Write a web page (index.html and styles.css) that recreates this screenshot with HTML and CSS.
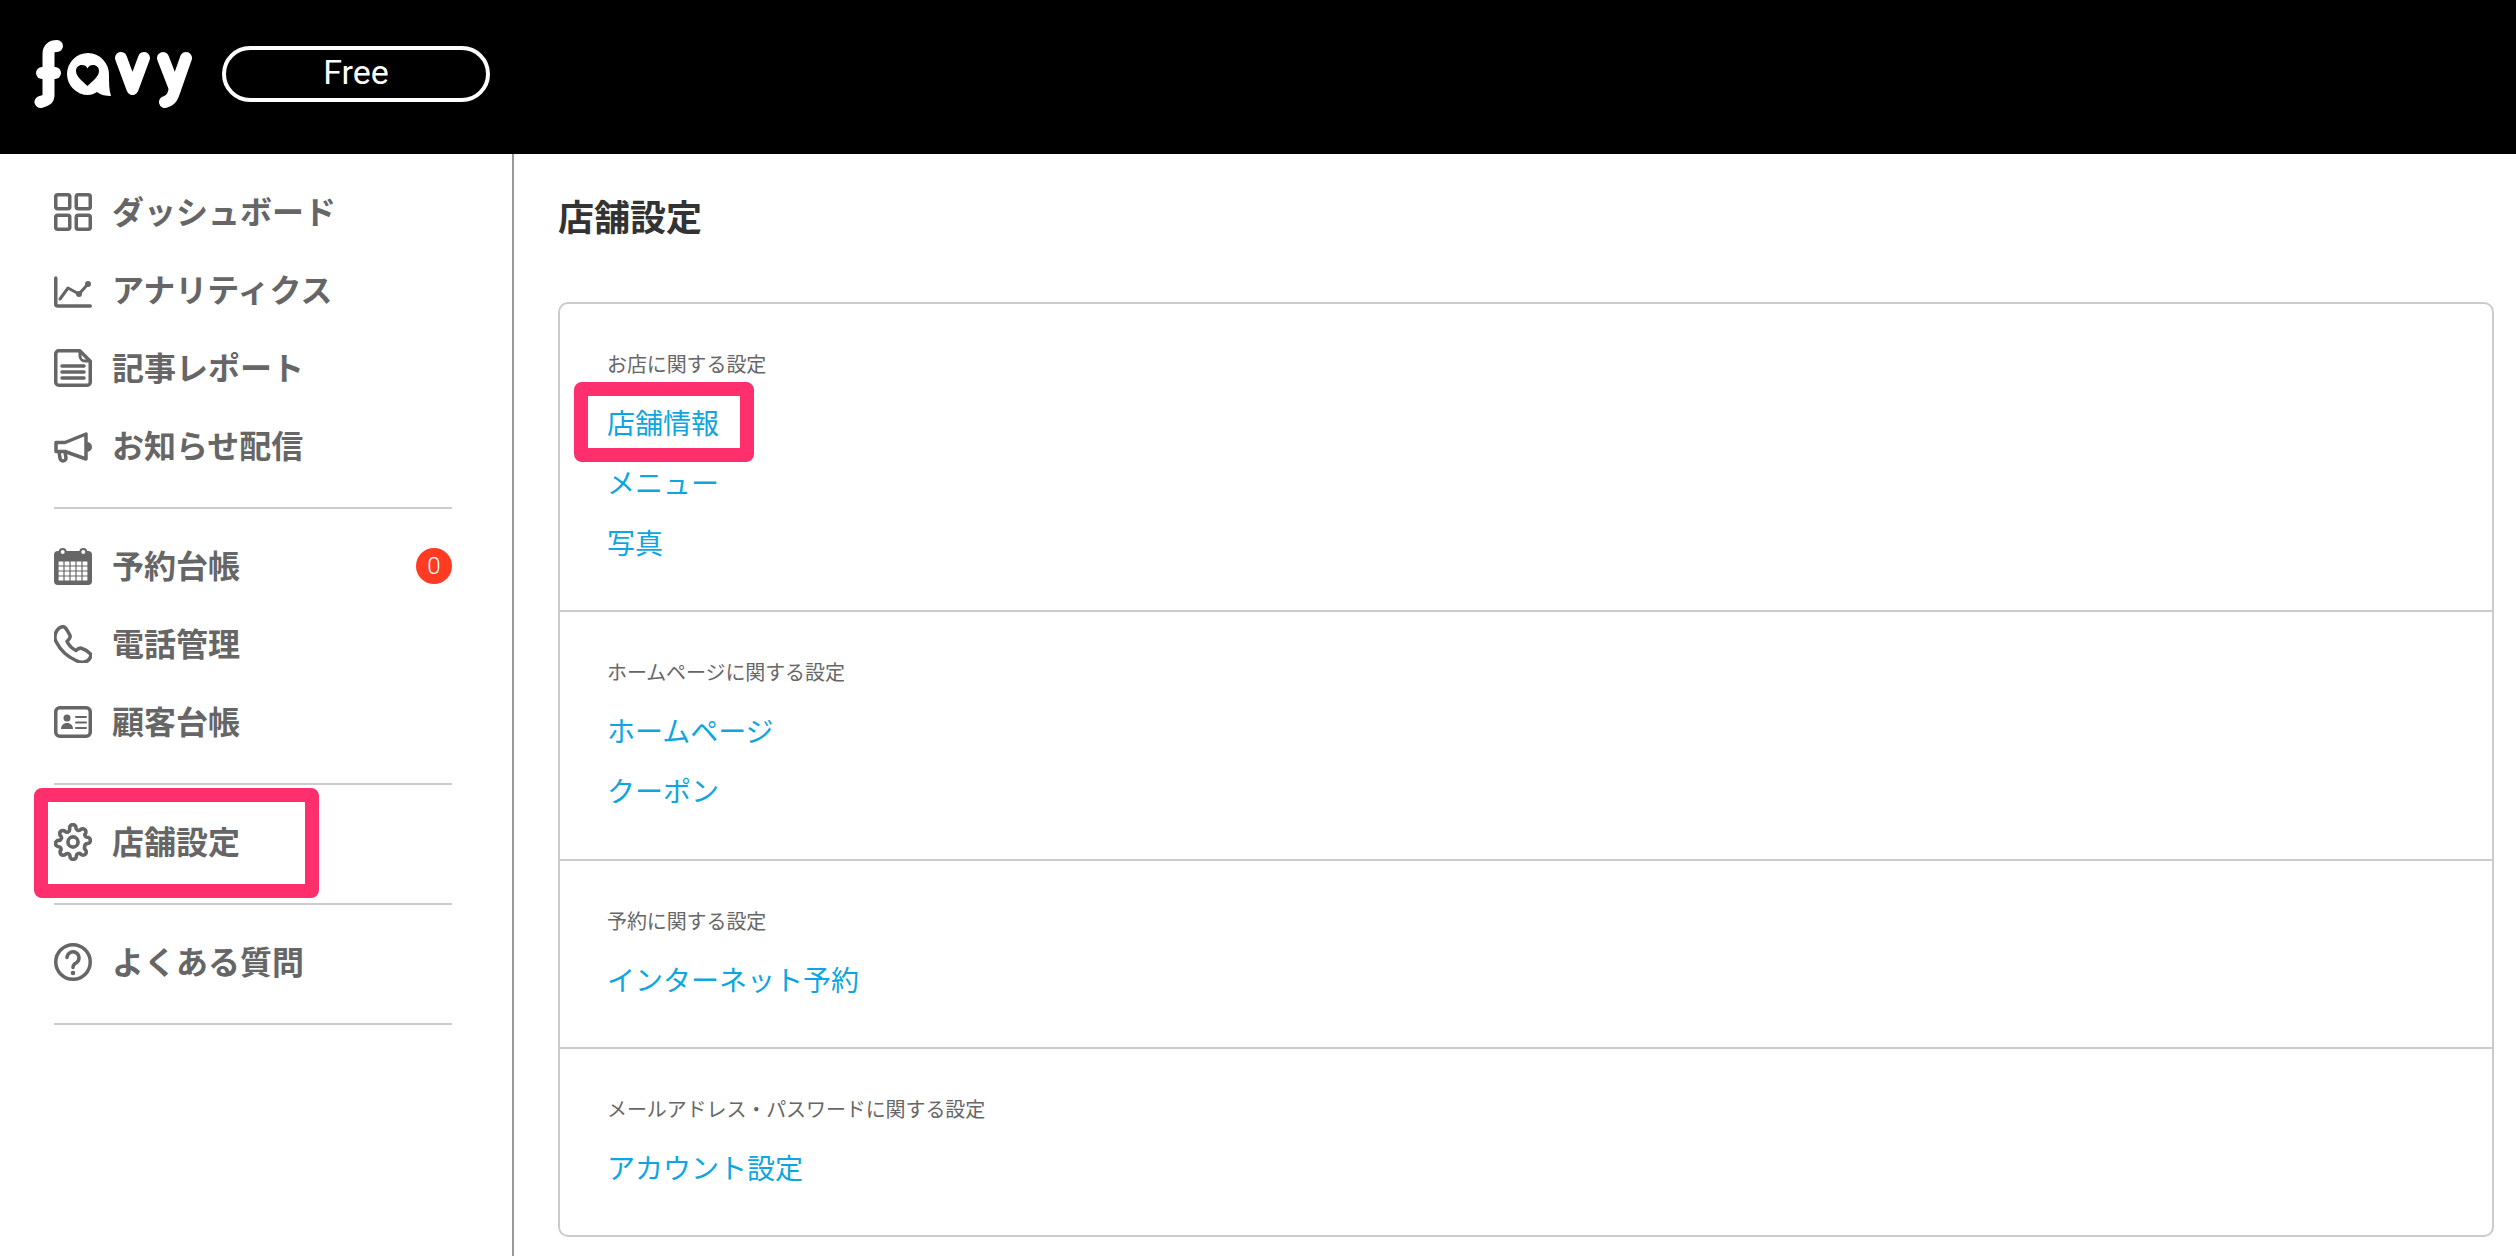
FILE: index.html
```html
<!DOCTYPE html>
<html lang="ja">
<head>
    <meta charset="UTF-8">
    <title>店舗設定</title>
    <link rel="stylesheet" href="styles.css">
</head>
<body>
    <header class="topbar">
        <svg class="logo" viewBox="0 0 160 70" aria-label="favy">
            <g fill="none" stroke="#fff" stroke-width="12" stroke-linecap="round" stroke-linejoin="round">
                <path d="M24 7c-5 0-8.500 2-8.500 8v41c0 4-3 6-8 7"/>
                <path d="M9 34h13"/>
                <path d="M88 19l11.500 31L111 19"/>
                <path d="M130 19l12 31"/>
                <path d="M153 19l-13 37c-1.500 4-4 6-8 7"/>
            </g>
            <path fill="#fff" d="M55 14a21.500 21.500 0 0 1 21 22c0 8 0 15 2 21-5 0-10-1-14-4-3 2-6 3-9 3a21 21 0 0 1 0-42z"/>
            <path fill="#000" d="M54.500 47c-4-4-11.500-9-11.500-15 0-3.500 2.500-6 6-6 2.500 0 4.500 1 5.500 3.500 1-2.500 3-3.500 5.500-3.500 3.500 0 6 2.500 6 6 0 6-7.500 11-11.500 15z"/>
        </svg>
        <span class="plan">Free</span>
    </header>

    <div class="layout">
        <aside class="sidebar">
            <!-- main menu -->
            <ul class="nav-group">
                <li class="nav-item">
                    <svg class="icon" viewBox="0 0 38 38">
                        <rect x="1.750" y="1.750" width="14" height="14" rx="2"/>
                        <rect x="22.250" y="1.750" width="14" height="14" rx="2"/>
                        <rect x="1.750" y="22.250" width="14" height="14" rx="2"/>
                        <rect x="22.250" y="22.250" width="14" height="14" rx="2"/>
                    </svg>
                    <span class="nav-label">ダッシュボード</span>
                </li>
                <li class="nav-item">
                    <svg class="icon" viewBox="0 0 38 38">
                        <path d="M1.750 7v26a2 2 0 0 0 2 2h32.500"/>
                        <path class="line" d="M6 28l8-11 11 6 9-10"/>
                        <circle class="dot" cx="25" cy="23" r="3"/>
                        <circle class="dot" cx="34" cy="13" r="3"/>
                    </svg>
                    <span class="nav-label">アナリティクス</span>
                </li>
                <li class="nav-item">
                    <svg class="icon" viewBox="0 0 38 38">
                        <path d="M4.750 1.750h21l10.500 10.500v21a3 3 0 0 1-3 3h-28.500a3 3 0 0 1-3-3v-28.500a3 3 0 0 1 3-3z"/>
                        <path class="line" d="M26 2v5a5 5 0 0 0 5 5h5"/>
                        <path d="M8 17h22M8 23h22M8 29h22"/>
                    </svg>
                    <span class="nav-label">記事レポート</span>
                </li>
                <li class="nav-item">
                    <svg class="icon" viewBox="0 0 38 38">
                        <path d="M2 15.500h9L32 7v25L11 24.500H2z"/>
                        <path class="solid" d="M33 15a5 5 0 0 1 0 10z"/>
                        <path d="M5 25l1 6a3 3 0 0 0 6 0l-1-6"/>
                    </svg>
                    <span class="nav-label">お知らせ配信</span>
                </li>
            </ul>
            <ul class="nav-group">
                <li class="nav-item">
                    <svg class="icon" viewBox="0 0 38 38">
                        <circle class="dot" cx="8.700" cy="5" r="4"/>
                        <circle class="dot" cx="29.300" cy="5" r="4"/>
                        <path class="solid" d="M4 4h30a4 4 0 0 1 4 4v26a4 4 0 0 1-4 4H4a4 4 0 0 1-4-4V8a4 4 0 0 1 4-4z"/>
                        <circle class="hole" cx="8.700" cy="5" r="2"/>
                        <circle class="hole" cx="29.300" cy="5" r="2"/>
                        <g class="grid">
                            <rect x="4" y="14" width="30" height="20"/>
                            <path d="M10 14v20M16 14v20M22 14v20M28 14v20M4 19h30M4 24h30M4 29h30"/>
                        </g>
                    </svg>
                    <span class="nav-label">予約台帳</span>
                    <span class="badge">0</span>
                </li>
                <li class="nav-item">
                    <svg class="icon" viewBox="0 0 38 38">
                        <path d="M3 5.500c2-3 6-5 8-3 2 2 4 6 5 8 1 2-1 4-3 6 2 4 5 7 9 9 2-2 4-3 6-2 3 1 6 3 8 5 2 2 0 5-2 7-4 3-8 2-12 0-9-4-16-11-20-19-2-4-1-8 1-11z"/>
                    </svg>
                    <span class="nav-label">電話管理</span>
                </li>
                <li class="nav-item">
                    <svg class="icon" viewBox="0 0 38 38">
                        <rect x="1.750" y="4.750" width="34.500" height="28.500" rx="4"/>
                        <circle class="dot" cx="13" cy="15" r="3.500"/>
                        <path class="solid" d="M7 26c0-4 3-6 6-6s6 2 6 6z"/>
                        <path class="thin" d="M22 14h10M22 19.500h10M22 25h10"/>
                    </svg>
                    <span class="nav-label">顧客台帳</span>
                </li>
            </ul>
            <ul class="nav-group">
                <li class="nav-item">
                    <svg class="icon" viewBox="0 0 24 24">
                        <g class="gear">
                            <circle cx="12" cy="12" r="3.200"/>
                            <path d="M19.400 15a1.650 1.650 0 0 0 .33 1.820l.06.06a2 2 0 0 1-2.830 2.830l-.06-.06a1.650 1.650 0 0 0-2.800 1.170V21a2 2 0 0 1-4 0v-.09a1.650 1.650 0 0 0-2.800-1.170l-.06.06a2 2 0 0 1-2.830-2.830l.06-.06A1.650 1.650 0 0 0 3.090 15H3a2 2 0 0 1 0-4h.09a1.650 1.650 0 0 0 1.170-2.800l-.06-.06a2 2 0 0 1 2.830-2.830l.06.06A1.650 1.650 0 0 0 9.890 4.200V3a2 2 0 0 1 4 0v.09a1.650 1.650 0 0 0 2.800 1.170l.06-.06a2 2 0 0 1 2.830 2.830l-.06.06A1.650 1.650 0 0 0 20.910 9H21a2 2 0 0 1 0 4h-.09a1.650 1.650 0 0 0-1.510 2z"/>
                        </g>
                    </svg>
                    <span class="nav-label">店舗設定</span>
                    <span class="highlight highlight-nav"></span>
                </li>
            </ul>
            <ul class="nav-group">
                <li class="nav-item">
                    <svg class="icon" viewBox="0 0 38 38">
                        <circle cx="19" cy="19" r="17.250"/>
                        <path d="M13 14.500a6 6 0 1 1 9 5.500c-2 1-3 2-3 4.500"/>
                        <circle class="dot" cx="19" cy="30" r="2.300"/>
                    </svg>
                    <span class="nav-label">よくある質問</span>
                </li>
            </ul>
        </aside>

        <main class="content">
            <h1 class="page-title">店舗設定</h1>
            <div class="card">
                <section class="card-section">
                    <h2 class="section-label">お店に関する設定</h2>
                    <a class="section-link" href="#">店舗情報<span class="highlight highlight-link"></span></a>
                    <a class="section-link" href="#">メニュー</a>
                    <a class="section-link" href="#">写真</a>
                </section>
                <section class="card-section card-section-tall">
                    <h2 class="section-label">ホームページに関する設定</h2>
                    <a class="section-link" href="#">ホームページ</a>
                    <a class="section-link" href="#">クーポン</a>
                </section>
                <section class="card-section">
                    <h2 class="section-label">予約に関する設定</h2>
                    <a class="section-link" href="#">インターネット予約</a>
                </section>
                <section class="card-section">
                    <h2 class="section-label">メールアドレス・パスワードに関する設定</h2>
                    <a class="section-link" href="#">アカウント設定</a>
                </section>
            </div>
        </main>
    </div>
</body>
</html>
```

FILE: styles.css
```css
* {
    box-sizing: border-box;
}
html, body {
    height: 100%;
}
body {
    margin: 0;
    display: flex;
    flex-direction: column;
    background-color: #fff;
    color: #666;
    font-family: "Noto Sans CJK JP", "Noto Sans", sans-serif;
    overflow: hidden;
}
.topbar {
    flex: none;
    height: 154px;
    padding: 0 0 6px 33px;
    display: flex;
    align-items: center;
    gap: 29px;
    background-color: #000;
}
.logo {
    width: 160px;
    height: 70px;
}
.plan {
    width: 268px;
    height: 56px;
    padding-bottom: 5px;
    border: 4px solid #fff;
    border-radius: 28px;
    display: flex;
    align-items: center;
    justify-content: center;
    color: #fff;
    font-family: Roboto, sans-serif;
    font-size: 34px;
    font-weight: 400;
}
.layout {
    flex: 1;
    display: flex;
    min-height: 0;
}
.sidebar {
    flex: none;
    width: 514px;
    padding: 19px 60px 0 54px;
    border-right: 2px solid #999;
}
.nav-group {
    list-style: none;
    margin: 0 0 18px;
    padding: 0 0 22px;
    border-bottom: 2px solid #ccc;
}
.nav-item {
    position: relative;
    height: 78px;
    display: flex;
    align-items: center;
    gap: 20px;
    font-size: 32px;
    font-weight: 700;
    line-height: 1;
}
.nav-label {
    padding-bottom: 5px;
}
.icon {
    flex: none;
    width: 38px;
    height: 38px;
    fill: none;
    stroke: #666;
    stroke-width: 3.500;
    stroke-linecap: round;
    stroke-linejoin: round;
}
.icon .dot, .icon .solid {
    fill: #666;
    stroke: none;
}
.icon .hole {
    fill: #fff;
    stroke: none;
}
.icon .line {
    stroke-width: 3;
}
.icon .grid {
    fill: #fff;
    stroke: #666;
    stroke-width: 1.200;
    stroke-linecap: butt;
}
.icon .thin {
    stroke-width: 2;
}
.icon .gear {
    stroke-width: 2.300;
}
.badge {
    margin-left: auto;
    width: 36px;
    height: 36px;
    border-radius: 50%;
    display: flex;
    align-items: center;
    justify-content: center;
    background-color: #ff3b22;
    color: #fff;
    font-family: Roboto, sans-serif;
    font-size: 24px;
    font-weight: 300;
}
.highlight {
    position: absolute;
    border: 14px solid #ff2e6c;
    border-radius: 8px;
    pointer-events: none;
}
.highlight-nav {
    left: -20px;
    top: -15px;
    width: 285px;
    height: 110px;
}
.highlight-link {
    left: -33px;
    top: -12px;
    width: 180px;
    height: 80px;
}
.content {
    flex: 1;
    min-width: 0;
    padding: 0 22px 0 44px;
}
.page-title {
    margin: 0;
    height: 148px;
    padding-top: 37px;
    color: #333;
    font-size: 36px;
    font-weight: 700;
    line-height: 48px;
}
.card {
    border: 2px solid #ccc;
    border-radius: 10px;
}
.card-section {
    padding: 45px 47px 36px;
    border-bottom: 2px solid #ccc;
}
.card-section:last-child {
    border-bottom: none;
}
.card-section-tall {
    padding-bottom: 37px;
}
.section-label {
    margin: 0 0 15px;
    color: #666;
    font-size: 20px;
    font-weight: 400;
    line-height: 30px;
    letter-spacing: -0.1px;
}
.section-link {
    position: relative;
    display: block;
    width: fit-content;
    height: 60px;
    color: #0ea5e0;
    font-size: 28px;
    line-height: 56px;
    text-decoration: none;
}
```
